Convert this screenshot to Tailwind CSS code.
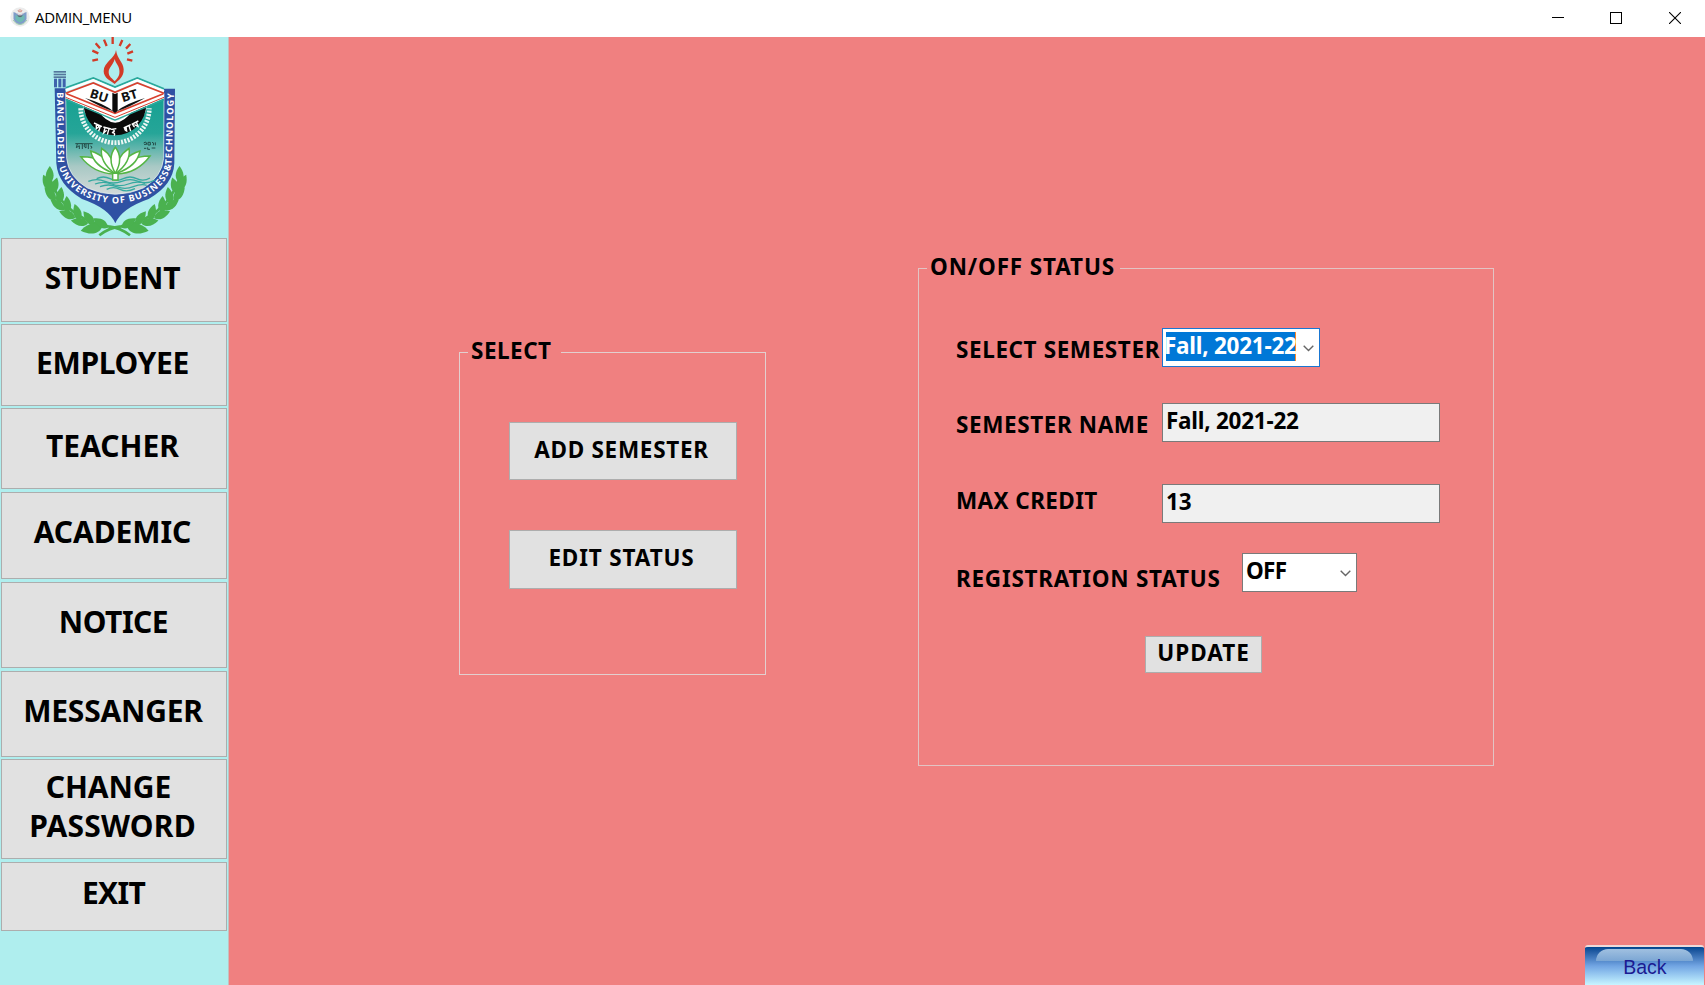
<!DOCTYPE html>
<html lang="en">
<head>
<meta charset="utf-8">
<title>ADMIN_MENU</title>
<script src="https://cdn.jsdelivr.net/npm/@tailwindcss/browser@4"></script>
</head>
<body class="w-[1705px] h-[985px] overflow-hidden flex flex-col bg-white text-black font-['Noto_Sans',sans-serif]">
<header class="h-[37px] shrink-0 flex items-center justify-between bg-white">
  <div class="flex items-center pl-[10px]">
    <svg class="w-5 h-5 mt-[-3px]" viewBox="0 0 20 20">
      <circle cx="10" cy="10" r="9.7" fill="#ececec"/>
      <path d="M3.5 5 L10 7.500 L16.500 5 V12 Q15 16 10 18 Q5 16 3.500 12Z" fill="#7f9cc9"/>
      <path d="M5.500 8 L10 9.500 L14.500 8 V12 Q13 15 10 15.500 Q7 15 5.500 12Z" fill="#6fb9b2"/>
      <path d="M5 5.500 L10 7.500 L15 5.500 L10 9Z" fill="#e3d2d2"/>
      <path d="M7 8.500 Q10 12 13 8.500Z" fill="#5b686e"/>
      <path d="M10 2 V5.500 M8 3 L9 5 M12 3 L11 5" stroke="#d8a39b" stroke-width="1.200"/>
      <path d="M3 13 Q6 18 10 17.500 Q14 18 17 13" fill="none" stroke="#a5cfae" stroke-width="1"/>
    </svg>
    <span class="ml-[5px] mt-[-3px] text-[15px] leading-5 tracking-[-0.3px] font-['Open_Sans',sans-serif]">ADMIN_MENU</span>
  </div>
  <div class="flex items-center gap-[46px] pr-[24px] pb-px">
    <svg class="w-3 h-3 -ml-px" viewBox="0 0 12 12"><path d="M0 5.500 H12" stroke="#000"/></svg>
    <svg class="w-3 h-3 mr-px" viewBox="0 0 12 12"><rect x=".5" y=".5" width="11" height="11" fill="none" stroke="#000"/></svg>
    <svg class="w-3 h-3" viewBox="0 0 12 12"><path d="M0 0 L12 12 M12 0 L0 12" stroke="#000" stroke-width="1.100"/></svg>
  </div>
</header>
<div class="flex flex-1 min-h-0">
  <nav class="w-[229px] shrink-0 bg-[#afeeee] border-r border-[#c4c0bf] flex flex-col text-[30px] font-bold leading-[39px]">
    <div class="h-[201px] shrink-0 pl-[30px]">
      <svg class="w-[170px] h-[201px]" viewBox="0 21 510 603">
        <defs>
          <linearGradient id="water" x1="0" y1="0" x2="0" y2="1"><stop offset="0" stop-color="#0f9f90"/><stop offset=".45" stop-color="#26a598"/><stop offset=".75" stop-color="#a9c9c5"/><stop offset="1" stop-color="#d3dad9"/></linearGradient>
          <path id="band" d="M81 187 L83 390 C92 458 150 515 256 520 C350 518 414 465 425 400 L432 178"/>
          <path id="leaf" d="M0 2 C-18 -10 -14 -32 -2 -50 C14 -32 17 -12 0 2Z"/>
          <g id="branch" fill="#4ab14f">
            <path d="M300 616 Q270 592 235 589 Q150 575 98 515 Q62 470 56 425" fill="none" stroke="#4ab14f" stroke-width="8"/>
            <use href="#leaf" transform="translate(58 458) rotate(4)"/>
            <use href="#leaf" transform="translate(60 480) rotate(-22)"/>
            <use href="#leaf" transform="translate(66 490) rotate(20)"/>
            <use href="#leaf" transform="translate(76 510) rotate(-38)"/>
            <use href="#leaf" transform="translate(86 520) rotate(12)"/>
            <use href="#leaf" transform="translate(102 538) rotate(-52)"/>
            <use href="#leaf" transform="translate(112 548) rotate(0)"/>
            <use href="#leaf" transform="translate(134 563) rotate(-65)"/>
            <use href="#leaf" transform="translate(148 570) rotate(-14)"/>
            <use href="#leaf" transform="translate(172 580) rotate(-78)"/>
            <use href="#leaf" transform="translate(190 584) rotate(-34)"/>
            <use href="#leaf" transform="translate(214 592) rotate(-97) scale(1.250)"/>
            <use href="#leaf" transform="translate(232 592) rotate(-56)"/>
          </g>
        </defs>
        <!-- torch flame and rays -->
        <g stroke="#d23b27" stroke-width="7">
          <path d="M248 20 V42 M222 29 L230 48 M277 30 L269 48 M197 40 L210 55 M301 42 L288 56 M187 62 L205 70 M309 64 L292 71 M187 92 L204 88 M307 92 L291 88"/>
        </g>
        <path d="M258 60 C256 85 221 96 221 124 C221 144 242 153 254 162 C266 150 282 142 281 118 C280 96 262 88 258 60Z" fill="#d23b27"/>
        <path d="M254 87 C250 104 236 112 236 127 C236 141 247 145 254 154 C264 144 270 135 268 120 C267 106 257 101 254 87Z" fill="#afeeee"/>
        <!-- shield -->
        <path d="M74 175 H107 V200 H402 V176 H435 L433 400 Q430 465 356 507 Q275 535 256 580 Q237 535 156 507 Q84 465 79 400Z" fill="#2f51a3"/>
        <g fill="#54779c"><rect x="71" y="123" width="37" height="5"/><rect x="71" y="131" width="37" height="5"/><rect x="71" y="139" width="37" height="5"/></g>
        <g fill="#3f62ac"><rect x="72" y="146" width="9" height="26"/><rect x="85" y="146" width="9" height="26"/><rect x="98" y="146" width="9" height="26"/></g>
        <path d="M107 190 L190 160 L255 190 L322 160 L402 190 L401 385 Q396 440 340 474 Q300 492 256 493 Q212 492 172 474 Q115 440 110 385Z" fill="url(#water)" stroke="#e8f4f4" stroke-width="2"/>
        <text fill="#fff" font-family="Noto Sans" font-weight="700" font-size="27"><textPath href="#band" textLength="874" lengthAdjust="spacing">BANGLADESH UNIVERSITY OF BUSINESS&amp;TECHNOLOGY</textPath></text>
        <!-- gear -->
        <path d="M152 235 A103 103 0 0 0 358 235" fill="none" stroke="#eef7f5" stroke-width="14" stroke-dasharray="6 4"/>
        <path d="M157 222 A99 99 0 0 0 353 222 L322 235 Q255 345 190 238Z" fill="#fff"/>
        <path d="M161 222 A94 94 0 0 0 349 222 L318 235 L255 262 L192 237Z" fill="#0a0a0a"/>
        <path d="M203 240 Q255 316 309 240 L255 262Z" fill="#fff"/>
        <path d="M214 246 Q255 298 298 246 L255 264Z" fill="#a9d8d3"/>
        <g fill="none" stroke="#fff" stroke-width="4.200">
          <path d="M192 279 L216 290 M199 282 V296 L206 291 V285 M211 289 L206 304 M220 291 L243 297 M225 293 L221 309 L230 301 M237 296 L232 314 M243 298 L259 296 M248 298 Q259 303 246 308 Q258 309 252 317"/>
          <path d="M281 294 L302 284 M288 291 Q280 300 290 303 L288 291 M297 287 L302 303 M305 283 L325 273 M311 280 Q306 287 314 291 M319 276 L324 289 L313 284"/>
        </g>
        <g fill="none" stroke="#234b47" stroke-width="3">
          <path d="M136 341 H188 M142 342 L139 353 L148 347 V357 M157 342 V357 M164 342 Q158 350 168 354 V342 M175 342 V357 M181 348 Q190 350 183 356"/>
          <path d="M341 339 Q350 332 350 343 H342 M354 337 H361 V345 H354Z M366 337 Q374 337 370 346 M376 337 V346 M342 355 H349 M353 352 V358 H360 M365 354 H376"/>
        </g>
        <!-- open book -->
        <path d="M107 190 L190 158 L255 188 L322 158 L402 190 V205 L255 270 L107 205Z" fill="#fff"/>
        <g fill="none">
          <path d="M107 173 L190 144 L255 171 L322 144 L402 176" stroke="#29a89b" stroke-width="5"/>
          <path d="M107 181 L190 151 L255 179 L322 151 L402 184" stroke="#fff" stroke-width="7"/>
          <path d="M107 190 L190 159 L255 187 L322 159 L402 190" stroke="#d9402e" stroke-width="5"/>
          <path d="M110 191 L255 250 L400 191" stroke="#d9402e" stroke-width="5"/>
          <path d="M107 202 L255 262 L402 202" stroke="#d9402e" stroke-width="3"/>
          <path d="M107 209 L255 270 L402 209" stroke="#29a89b" stroke-width="4"/>
        </g>
        <path d="M247 188 L255 192 L263 188 V243 L255 249 L247 243Z" fill="#0a0a0a"/>
        <path d="M165 204 Q225 222 250 244 Q210 231 165 204 M345 204 Q285 222 260 244 Q300 231 345 204" fill="#111"/>
        <g font-family="Noto Sans" font-weight="700" font-size="38" fill="#111">
          <text transform="translate(177 202) rotate(17)" textLength="56" lengthAdjust="spacingAndGlyphs">BU</text>
          <text transform="translate(278 217) rotate(-17)" textLength="50" lengthAdjust="spacingAndGlyphs">BT</text>
        </g>
        <!-- waves -->
        <g fill="none" stroke="#35a9a0" stroke-width="4">
          <path d="M200 446 Q220 436 240 446 T280 446 T320 446 T360 444"/><path d="M175 454 Q200 444 225 454 T275 454 T325 454 T375 450"/><path d="M195 462 Q220 452 245 462 T295 462 T345 460"/><path d="M210 470 Q235 460 260 470 T310 470 T350 466"/><path d="M230 478 Q250 468 270 478 T315 476"/>
        </g>
        <!-- water lily -->
        <g fill="#fff" stroke="#55b545" stroke-width="4.500">
          <path d="M252 432 Q190 430 152 380 Q220 378 252 432Z"/><path d="M260 432 Q322 430 360 378 Q292 378 260 432Z"/>
          <path d="M252 430 Q190 408 182 363 Q235 380 254 430Z"/><path d="M260 430 Q322 408 330 363 Q277 380 258 430Z"/>
          <path d="M254 430 Q208 395 215 355 Q253 380 256 430Z"/><path d="M258 430 Q304 395 297 355 Q259 380 256 430Z"/>
          <path d="M256 430 Q230 385 256 352 Q282 385 256 430Z"/>
          <path d="M248 430 H264 V450 H248Z"/>
        </g>
        <!-- laurel -->
        <use href="#branch"/>
        <use href="#branch" transform="translate(508 0) scale(-1 1)"/>
      </svg>
    </div>
    <div class="flex flex-col pl-[1px] pr-[1px]">
      <button class="h-[84px] bg-[#e1e1e1] border border-[#adadad] pb-[6px] pr-[3px] tracking-[-0.2px]">STUDENT</button>
      <button class="mt-[2px] h-[82px] bg-[#e1e1e1] border border-[#adadad] pb-[6px] pr-[3px] tracking-[-0.35px]">EMPLOYEE</button>
      <button class="mt-[2px] h-[81px] bg-[#e1e1e1] border border-[#adadad] pb-[7px] pr-[3px]">TEACHER</button>
      <button class="mt-[3px] h-[87px] bg-[#e1e1e1] border border-[#adadad] pb-[8px] pr-[3px] tracking-[-0.1px]">ACADEMIC</button>
      <button class="mt-[3px] h-[86px] bg-[#e1e1e1] border border-[#adadad] pb-[7px] pr-[1px] tracking-[-0.5px]">NOTICE</button>
      <button class="mt-[3px] h-[86px] bg-[#e1e1e1] border border-[#adadad] pb-[7px] pr-[2px] tracking-[-0.2px]">MESSANGER</button>
      <button class="mt-[2px] h-[100px] bg-[#e1e1e1] border border-[#adadad] pb-[6px] pr-[3px] tracking-[0.2px]"><span class="pr-2 tracking-[-0.1px]">CHANGE</span><br>PASSWORD</button>
      <button class="mt-[3px] h-[69px] bg-[#e1e1e1] border border-[#adadad] pb-[8px] pr-[1px] tracking-[-0.7px]">EXIT</button>
    </div>
  </nav>
  <main class="relative flex-1 flex items-start bg-[#f08080] text-[22.5px] font-bold leading-6">
    <fieldset class="ml-[230px] mt-[300px] w-[307px] h-[338px] border border-[#e2cfcf]">
      <legend class="ml-[8px] pl-[3px] pr-[9px] pt-[2px] pb-[4px] tracking-[0.5px]">SELECT</legend>
      <div class="flex flex-col gap-[50px] pt-[55px] pl-[49px]">
        <button class="w-[228px] h-[58px] bg-[#e1e1e1] border border-[#adadad] pb-[3px] pr-[3px] tracking-[0.72px]">ADD SEMESTER</button>
        <button class="w-[228px] h-[59px] bg-[#e1e1e1] border border-[#adadad] pb-[4px] pr-[3px] tracking-[0.85px]">EDIT STATUS</button>
      </div>
    </fieldset>
    <fieldset class="ml-[152px] mt-[216px] w-[576px] h-[513px] border border-[#e2c4c4]">
      <legend class="ml-[8px] pl-[3px] pr-[5px] pt-[2px] pb-[4px] tracking-[0.85px]">ON/OFF STATUS</legend>
      <div class="flex flex-col pl-[37px] pt-[45px] whitespace-nowrap">
        <div class="flex h-[39px] items-center">
          <label class="w-[206px] pt-1 tracking-[0.6px]">SELECT SEMESTER</label>
          <div class="w-[158px] h-[39px] bg-white border border-[#1976d2] flex items-start justify-between pt-[3px] pl-[3px]">
            <span class="w-[130px] h-[29px] bg-[#0078d7] text-white border-r border-[#ff8728] leading-[28px] tracking-[-0.25px]"><span class="-ml-[2px]">Fall, 2021-22</span></span>
            <svg class="w-[11px] h-[7px] mt-[13px] mr-[5px]" viewBox="0 0 11 7"><path d="M.7 .7 L5.500 5.500 L10.300 .7" fill="none" stroke="#666" stroke-width="1.400"/></svg>
          </div>
        </div>
        <div class="flex h-[39px] items-center mt-9">
          <label class="w-[206px] pt-1 tracking-[0.6px]">SEMESTER NAME</label>
          <div class="w-[278px] h-[39px] bg-[#f0f0f0] border border-[#7a7a7a] pl-[3px] pt-[5px] tracking-[-0.25px]">Fall, 2021-22</div>
        </div>
        <div class="flex h-[39px] items-center mt-[42px]">
          <label class="w-[206px] pb-[5px] tracking-[0.4px]">MAX CREDIT</label>
          <div class="w-[278px] h-[39px] bg-[#f0f0f0] border border-[#7a7a7a] pl-[3px] pt-[5px] tracking-[-0.2px]">13</div>
        </div>
        <div class="flex h-[39px] items-center mt-[30px]">
          <label class="w-[286px] pt-3 tracking-[0.75px]">REGISTRATION STATUS</label>
          <div class="w-[115px] h-[39px] bg-white border border-[#7a7a7a] pl-[3px] pt-[5px] flex items-start justify-between tracking-[-0.7px]">OFF
            <svg class="w-[11px] h-[7px] mt-[11px] mr-[5px]" viewBox="0 0 11 7"><path d="M.7 .7 L5.500 5.500 L10.300 .7" fill="none" stroke="#666" stroke-width="1.400"/></svg>
          </div>
        </div>
        <button class="ml-[189px] mt-[44px] w-[117px] h-[37px] bg-[#e1e1e1] border border-[#adadad] pb-[3px] tracking-[1px]">UPDATE</button>
      </div>
    </fieldset>
    <button class="absolute right-[1px] bottom-0 w-[119px] h-[40px] border-t-2 border-[#eedada] overflow-hidden rounded-t-[3px] bg-linear-to-b from-[#00458f] via-[#72a5e3] to-[#c8f5ff] font-normal font-['Liberation_Sans',sans-serif] text-[20.5px] text-[#1b1b92]">
      <span class="absolute left-[11px] top-[2px] w-[97px] h-[12px] rounded-t-[12px] bg-linear-to-b from-[#a0c0e0] to-[#7ba6d4]"></span>
      <span class="relative top-[1px] inline-block scale-x-95">Back</span>
    </button>
  </main>
</div>
</body>
</html>
